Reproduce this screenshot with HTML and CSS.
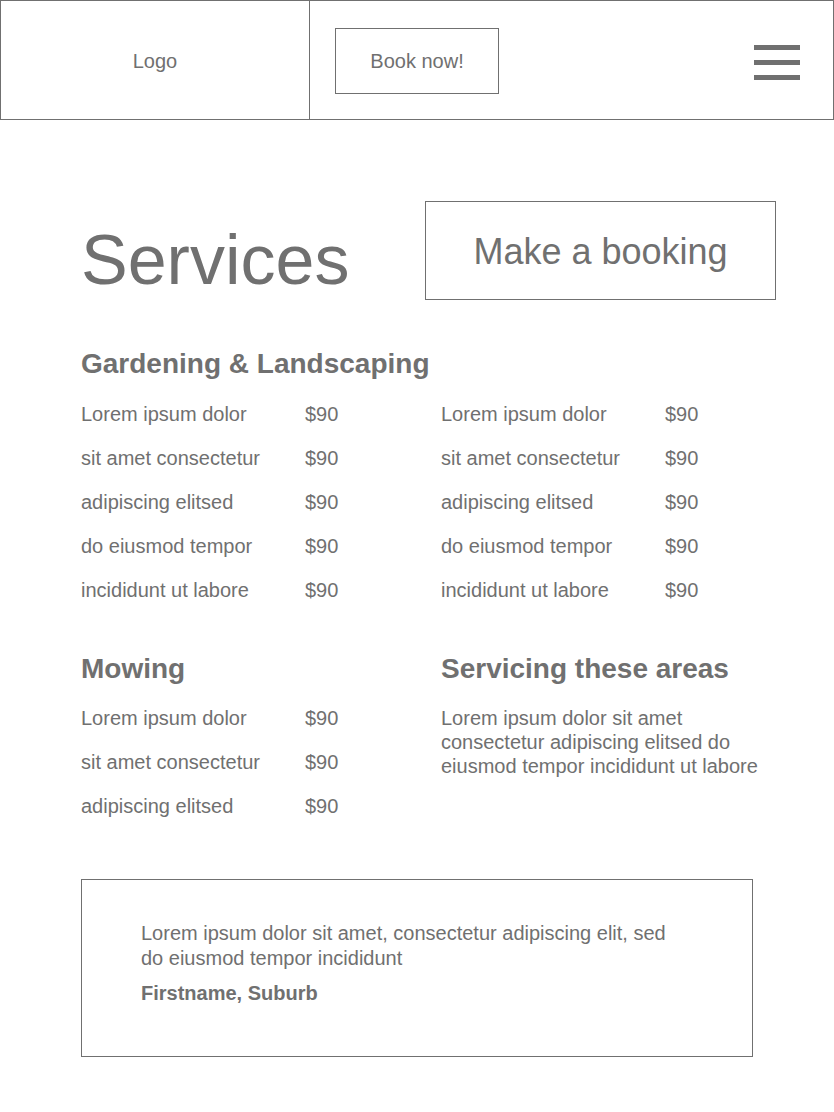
FILE: index.html
```html
<!DOCTYPE html>
<html lang="en">
<head>
<meta charset="utf-8">
<title>Services</title>
<link rel="stylesheet" href="styles.css">
</head>
<body>
<header class="topbar">
  <div class="logo-cell">Logo</div>
  <div class="nav-cell">
    <a class="book-btn" href="#">Book now!</a>
    <div class="burger" aria-label="Menu">
      <span></span><span></span><span></span>
    </div>
  </div>
</header>

<main class="page">
  <section class="intro">
    <h1 class="title">Services</h1>
    <a class="booking-btn" href="#">Make a booking</a>
  </section>

  <section class="block">
    <h2 class="heading">Gardening &amp; Landscaping</h2>
    <div class="cols">
      <ul class="price-list">
        <li><span>Lorem ipsum dolor</span><span>$90</span></li>
        <li><span>sit amet consectetur</span><span>$90</span></li>
        <li><span>adipiscing elitsed</span><span>$90</span></li>
        <li><span>do eiusmod tempor</span><span>$90</span></li>
        <li><span>incididunt ut labore</span><span>$90</span></li>
      </ul>
      <ul class="price-list">
        <li><span>Lorem ipsum dolor</span><span>$90</span></li>
        <li><span>sit amet consectetur</span><span>$90</span></li>
        <li><span>adipiscing elitsed</span><span>$90</span></li>
        <li><span>do eiusmod tempor</span><span>$90</span></li>
        <li><span>incididunt ut labore</span><span>$90</span></li>
      </ul>
    </div>
  </section>

  <section class="cols second">
    <div>
      <h2 class="heading">Mowing</h2>
      <ul class="price-list">
        <li><span>Lorem ipsum dolor</span><span>$90</span></li>
        <li><span>sit amet consectetur</span><span>$90</span></li>
        <li><span>adipiscing elitsed</span><span>$90</span></li>
      </ul>
    </div>
    <div>
      <h2 class="heading">Servicing these areas</h2>
      <p class="areas">Lorem ipsum dolor sit amet consectetur adipiscing elitsed do eiusmod tempor incididunt ut labore</p>
    </div>
  </section>

  <section class="testimonial">
    <p class="quote">Lorem ipsum dolor sit amet, consectetur adipiscing elit, sed do eiusmod tempor incididunt</p>
    <p class="author">Firstname, Suburb</p>
  </section>
</main>
</body>
</html>
```

FILE: styles.css
```css
* { box-sizing: border-box; }

body {
  margin: 0;
  font-family: "Liberation Sans", Arial, Helvetica, sans-serif;
  color: #707070;
  background: #fff;
}

a { color: inherit; text-decoration: none; }

.topbar {
  display: flex;
  width: 834px;
  height: 120px;
  border: 1px solid #707070;
}

.logo-cell {
  width: 309px;
  border-right: 1px solid #707070;
  display: flex;
  align-items: center;
  justify-content: center;
  font-size: 20px;
  padding-top: 2px;
}

.nav-cell {
  flex: 1;
  display: flex;
  align-items: center;
  justify-content: space-between;
  padding: 0 33px 0 25px;
}

.book-btn {
  width: 164px;
  height: 66px;
  margin-top: 2px;
  border: 1px solid #707070;
  display: flex;
  align-items: center;
  justify-content: center;
  font-size: 20px;
}

.burger {
  display: flex;
  flex-direction: column;
  gap: 10px;
  margin-top: 4px;
}

.burger span {
  display: block;
  width: 46px;
  height: 5px;
  background: #707070;
}

.page {
  width: 695px;
  margin-left: 81px;
}

.intro {
  display: flex;
  justify-content: space-between;
  align-items: flex-start;
  padding-top: 81px;
}

.title {
  margin: 24px 0 0;
  font-size: 70px;
  line-height: 70px;
  font-weight: normal;
}

.booking-btn {
  width: 351px;
  height: 99px;
  border: 1px solid #707070;
  display: flex;
  align-items: center;
  justify-content: center;
  font-size: 36px;
  padding-top: 2px;
}

.heading {
  margin: 0;
  font-size: 28px;
  line-height: 34px;
  font-weight: bold;
}

.block {
  margin-top: 47px;
}

.cols {
  display: grid;
  grid-template-columns: 360px 335px;
}

.price-list {
  list-style: none;
  margin: 11px 0 0;
  padding: 0;
}

.price-list li {
  display: grid;
  grid-template-columns: 224px auto;
  font-size: 20px;
  line-height: 44px;
}

.second {
  margin-top: 40px;
}

.second .price-list {
  margin-top: 10px;
}

.areas {
  margin: 20px 0 0;
  font-size: 20px;
  line-height: 24px;
  max-width: 330px;
}

.testimonial {
  width: 672px;
  height: 178px;
  margin-top: 51px;
  border: 1px solid #707070;
  padding: 41px 0 0 59px;
}

.quote {
  margin: 0;
  max-width: 545px;
  font-size: 20px;
  line-height: 25px;
}

.author {
  margin: 10px 0 0;
  font-size: 20px;
  line-height: 25px;
  font-weight: bold;
}
```
